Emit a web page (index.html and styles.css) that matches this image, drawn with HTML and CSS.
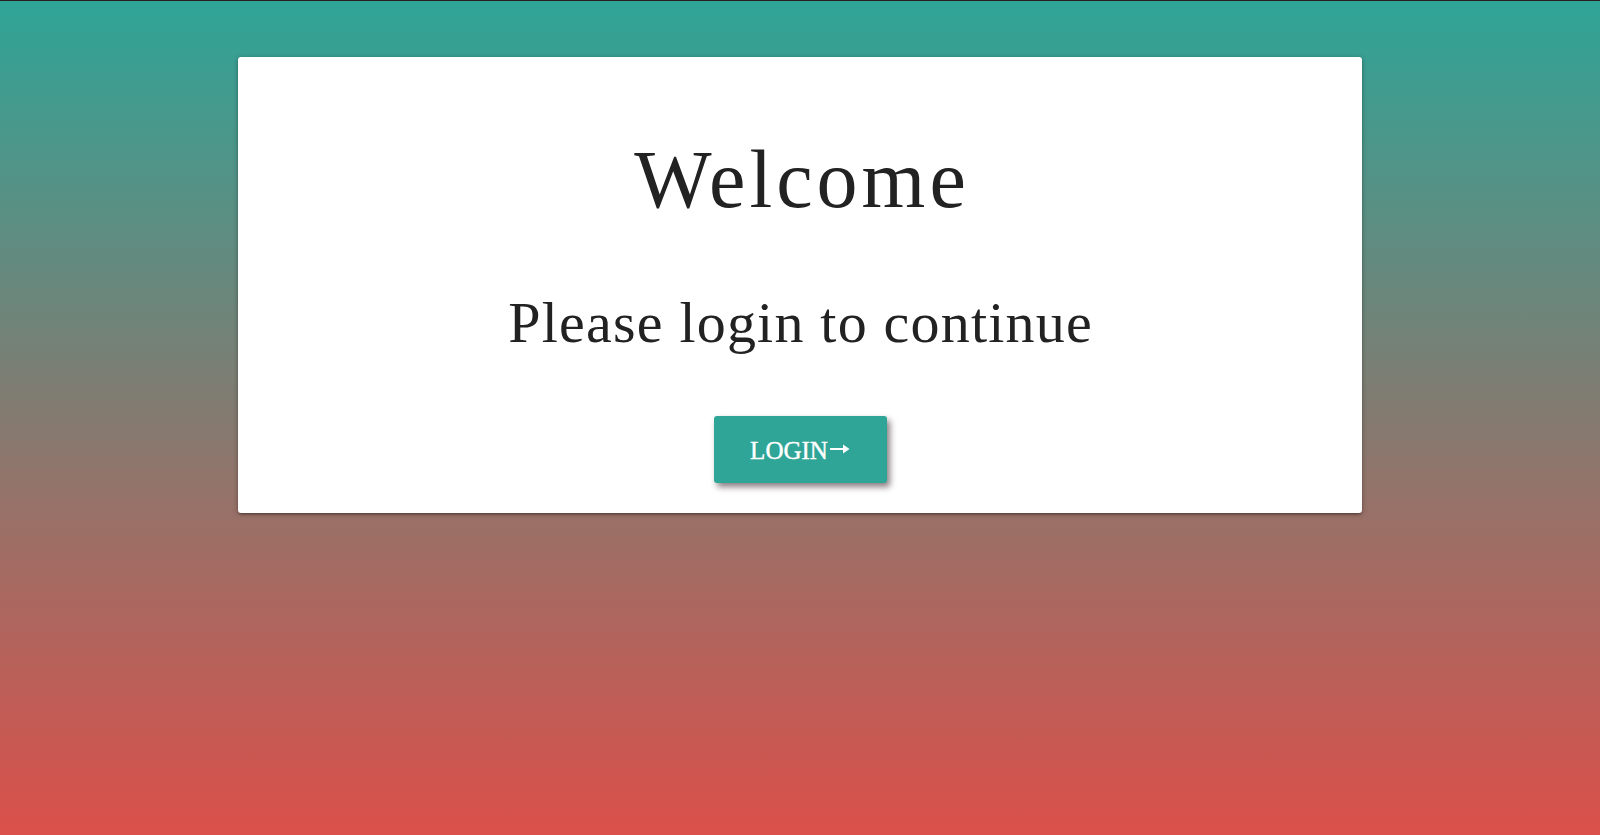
FILE: index.html
```html
<!DOCTYPE html>
<html lang="en">
<head>
<meta charset="utf-8">
<title>Welcome</title>
<link rel="stylesheet" href="styles.css">
</head>
<body>
  <main class="page">
    <section class="card">
      <h1 class="title">Welcome</h1>
      <h2 class="subtitle">Please login to continue</h2>
      <a class="login-btn" href="#"><span class="label">LOGIN</span><svg class="arrow" width="20" height="12" viewBox="0 0 20 12" aria-hidden="true"><path d="M0 6 H17" stroke="#ffffff" stroke-width="2" fill="none"/><path d="M13 1.5 L19.5 6 L13 10.5 Z" fill="#ffffff"/></svg></a>
    </section>
  </main>
</body>
</html>
```

FILE: styles.css
```css
html, body {
  margin: 0;
  padding: 0;
}

body {
  min-height: 100vh;
  box-sizing: border-box;
  border-top: 1px solid #2a1c20;
  background: linear-gradient(to bottom, #2ea597 0%, #847a70 50%, #db504a 100%);
  font-family: "Liberation Serif", "DejaVu Serif", serif;
  color: #222222;
}

.page {
  display: flex;
  justify-content: center;
  padding-top: 56px;
}

.card {
  width: 1124px;
  box-sizing: border-box;
  background: #ffffff;
  border-radius: 3px;
  box-shadow: 0 2px 2px 0 rgba(0, 0, 0, 0.14), 0 3px 1px -2px rgba(0, 0, 0, 0.12), 0 1px 5px 0 rgba(0, 0, 0, 0.3);
  display: flex;
  flex-direction: column;
  align-items: center;
  padding: 82px 0 30px;
}

.title {
  margin: 0;
  font-size: 82px;
  line-height: 82px;
  font-weight: normal;
  letter-spacing: 4px;
  padding-left: 4px;
  color: #222222;
}

.subtitle {
  margin: 73px 0 0;
  font-size: 58px;
  line-height: 58px;
  font-weight: normal;
  letter-spacing: 1.2px;
  padding-left: 1.2px;
  color: #222222;
}

.login-btn {
  margin-top: 64px;
  width: 173px;
  height: 67px;
  display: flex;
  align-items: center;
  justify-content: center;
  gap: 2px;
  background: #2ea597;
  color: #ffffff;
  font-size: 25px;
  text-decoration: none;
  border-radius: 3px;
  box-shadow: 3px 4px 6px rgba(40, 20, 30, 0.55);
}

.label {
  line-height: 25px;
  padding-top: 1px;
  -webkit-text-stroke: 0.4px #ffffff;
}

.arrow {
  display: block;
  margin-top: -2px;
}
```
